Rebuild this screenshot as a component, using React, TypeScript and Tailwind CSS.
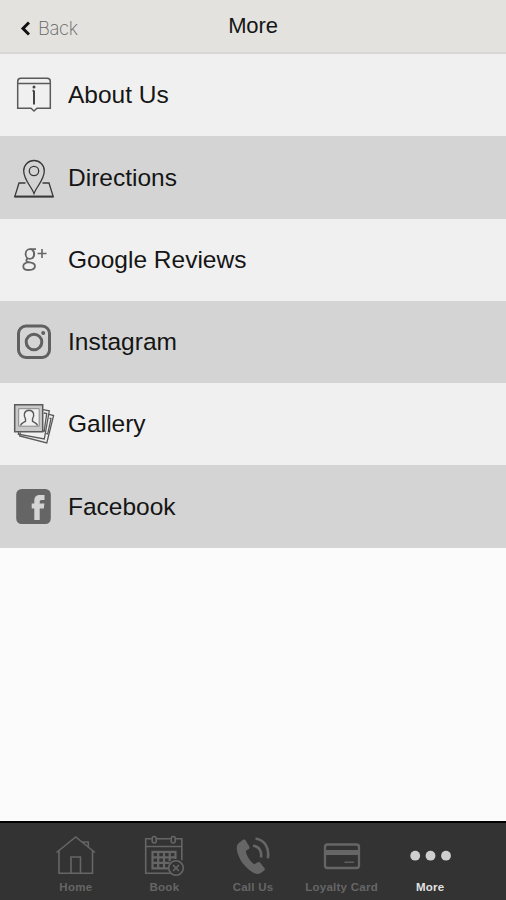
import type { ReactNode } from "react";

function AboutIcon() {
  return (
    <svg width="44" height="44" viewBox="0 0 44 44" fill="none" stroke="#5a5a5a" strokeWidth="1.5">
      <path d="M5.7 10.6V8.5c0-2 1-3.3 3-3.3h26.6c2 0 3 1.3 3 3.3v26.7H25L22 38l-3-2.8H5.7V10.6h32.6" />
      <path d="M22 17.5V31.5M20.5 17.8h1.5" stroke="#444" strokeWidth="2" />
      <circle cx="22" cy="14" r="1.5" fill="#444" stroke="none" />
    </svg>
  );
}

function DirectionsIcon() {
  return (
    <svg width="44" height="44" viewBox="0 0 44 44" fill="none" stroke="#383838" strokeWidth="1.3">
      <path d="M22 38.5C19.5 31.5 11.7 25 11.7 15.8a10.3 10.3 0 0 1 20.6 0C32.3 25 24.5 31.5 22 38.5z" />
      <circle cx="22" cy="16" r="4.7" />
      <path d="M13.5 28H7L2.8 41.5h38.4L37 28h-6.5" />
      <path d="M2.5 41.7h39" strokeWidth="1.8" />
    </svg>
  );
}

function GooglePlusIcon() {
  return (
    <svg width="44" height="44" viewBox="0 0 44 44" fill="none" stroke="#666" strokeWidth="1.8">
      <ellipse cx="17.8" cy="16" rx="4.2" ry="4.8" />
      <path d="M24 11.2h-6M21 12.5c1.8 2 1.8 6-.8 8M15.5 20.5c-1.8 1.7-1.6 3 1.2 3.6 3.8.8 6.3 1.3 6.3 3.9 0 2.5-2.6 4-6.2 4s-5.5-1.4-5.5-3.6c0-2.3 2-3.7 5.2-4.2" />
      <path d="M30 11v9M25.5 15.5h9" strokeWidth="1.6" />
    </svg>
  );
}

function InstagramIcon() {
  return (
    <svg width="44" height="44" viewBox="0 0 44 44" fill="none" stroke="#606060" strokeWidth="3">
      <rect x="6.5" y="6" width="31" height="31.5" rx="7.5" />
      <circle cx="22" cy="22" r="7.8" />
      <circle cx="31.2" cy="13" r="2" fill="#606060" stroke="none" />
    </svg>
  );
}

function GalleryIcon() {
  return (
    <svg width="44" height="44" viewBox="0 0 44 44" fill="none" stroke="#5a5a5a" strokeWidth="1.3">
      <path d="M37 12.3l4.6 1.2-6.8 27.4L7.7 34l.8-3.5" />
      <path d="M31 7.6l6.3 1.2-5 28.2-26-4.8.4-2" />
      <path d="M34 31.5l1.7.5 3.3-15.5-1.5-.4M31 29l1.2.2 2.5-17.7-3-.5" />
      <path d="M2.7 2.7h28v27h-28z" fill="#c9c9c9" strokeWidth="1.5" />
      <path d="M6.7 6.7h20.5v17.5H6.7z" fill="#f0f0f0" stroke="#888" strokeWidth="1" />
      <path d="M8.5 23.5c.5-2.5 3-3 5-4.2v-2.4c-2.3-3.5-1.5-8.7 3.5-8.7s5.8 5.2 3.5 8.7v2.4c2 1.2 4.5 1.7 5 4.2" strokeWidth="1.4" />
    </svg>
  );
}

function FacebookIcon() {
  return (
    <svg width="44" height="44" viewBox="0 0 44 44">
      <rect x="4.2" y="4" width="34.6" height="35" rx="5.5" fill="#656565" />
      <path d="M22.3 35V23.5h-2.6v-5h2.6v-2.7c0-4 2-5.7 6-5.7h4.2v4.9h-2.8c-1.6 0-2 .8-2 2v1.5h4.7l-.6 5h-4.1V35z" fill="#d4d4d4" />
    </svg>
  );
}

function HomeIcon() {
  return (
    <svg width="44" height="44" viewBox="0 0 44 44" fill="none" stroke="#666" strokeWidth="1.6">
      <path d="M2.5 18.5L21.7 3 41 18.5M5 16.5V39.3h33.5V16.5M17 39.3V23h9.5v16.3M28.5 8h5.8v5.2" />
    </svg>
  );
}

function BookIcon() {
  return (
    <svg width="44" height="44" viewBox="0 0 44 44" fill="none" stroke="#666" strokeWidth="1.6">
      <path d="M28.5 39.3H3.7V4.8h6M14.5 4.8h14M33.5 4.8h6.3v21.5M3.7 12.5h36" />
      <rect x="10.2" y="2.5" width="4" height="6.5" rx="2" />
      <rect x="29.2" y="2.5" width="4" height="6.5" rx="2" />
      <path d="M33.5 25v-7.2h-23v16.5H26M10.5 23.3h23M10.5 28.8h17M16.2 17.8v16.5M22 17.8v16.5M27.7 17.8v9.5" strokeWidth="2.2" />
      <circle cx="34" cy="34" r="7.3" />
      <path d="M31 31l6 6M37 31l-6 6" strokeWidth="1.6" />
    </svg>
  );
}

function CallIcon() {
  return (
    <svg width="44" height="44" viewBox="0 0 44 44" fill="none" stroke="#666" strokeWidth="2.6">
      <path d="M7.3 9.5l4.7-3.7c.9-.7 1.9-.5 2.5.4l3.8 6.3c.5.9.3 1.8-.5 2.4l-3 2.1c.8 4.8 4 10 8.5 13.2l3.5-1.9c.9-.5 1.8-.3 2.4.5l4.3 5.4c.6.8.5 1.7-.3 2.3l-3.8 2.7c-2.5 1.7-6 .5-9-1.8C13 32.5 8.3 25.5 6.3 18c-.9-3.4-.8-6.7 1-8.500z" fill="#666" stroke="none" />
      <path d="M22 11.8c6 .6 9 5.3 8 11.7M24.5 4.5c9.5 1.5 14 9.5 12.3 19.8" />
    </svg>
  );
}

function LoyaltyCardIcon() {
  return (
    <svg width="44" height="44" viewBox="0 0 44 44" fill="none" stroke="#666">
      <rect x="5" y="10.5" width="34" height="23.5" rx="2.5" strokeWidth="2.3" />
      <path d="M5 18.5h34" strokeWidth="5" />
      <path d="M24.5 28.2h9.5" strokeWidth="1.3" />
    </svg>
  );
}

function MoreIcon() {
  return (
    <svg width="44" height="44" viewBox="0 0 44 44" fill="#cfcfcf">
      <circle cx="7.2" cy="21.7" r="4.9" />
      <circle cx="22.5" cy="21.7" r="4.9" />
      <circle cx="38" cy="21.7" r="4.9" />
    </svg>
  );
}

type Item = { label: string; icon: ReactNode };

const rows: Item[] = [
  { label: "About Us", icon: <AboutIcon /> },
  { label: "Directions", icon: <DirectionsIcon /> },
  { label: "Google Reviews", icon: <GooglePlusIcon /> },
  { label: "Instagram", icon: <InstagramIcon /> },
  { label: "Gallery", icon: <GalleryIcon /> },
  { label: "Facebook", icon: <FacebookIcon /> },
];

const tabs: Item[] = [
  { label: "Home", icon: <HomeIcon /> },
  { label: "Book", icon: <BookIcon /> },
  { label: "Call Us", icon: <CallIcon /> },
  { label: "Loyalty Card", icon: <LoyaltyCardIcon /> },
  { label: "More", icon: <MoreIcon /> },
];

export default function App() {
  return (
    <div className="flex h-screen w-full flex-col overflow-hidden bg-[#fbfbfb] font-['Liberation_Sans',sans-serif]">
      <header className="grid h-[54px] shrink-0 grid-cols-3 items-center border-b-2 border-[#d9d8d5] bg-[#e3e2de]">
        <button className="flex items-center gap-2 pt-1 pl-5 text-left">
          <svg width="10" height="15" viewBox="0 0 10 15" fill="none" stroke="#111" strokeWidth="3">
            <path d="M9 1.5L3 7.5l6 6" />
          </svg>
          <span className="font-['Inter',sans-serif] text-[18.5px] leading-6 font-extralight tracking-[-0.4px] text-[#666]">Back</span>
        </button>
        <h1 className="text-center text-[22px] leading-6 tracking-[-0.1px] text-[#151515]">More</h1>
      </header>

      <ul className="shrink-0">
        {rows.map((row, i) => (
          <li
            key={row.label}
            className={`flex h-[82.3px] items-center gap-3 pl-3 ${i % 2 ? "bg-[#d4d4d4]" : "bg-[#f0f0f0]"}`}
          >
            {row.icon}
            <span className="pt-px text-[24.5px] text-[#151515]">{row.label}</span>
          </li>
        ))}
      </ul>

      <nav className="mt-auto flex h-[79px] shrink-0 justify-center border-t-2 border-black bg-[#333]">
        {tabs.map((tab) => (
          <button
            key={tab.label}
            className={`flex w-[88.6px] flex-col items-center pt-[11px] text-[11.5px] font-bold tracking-[0.25px] ${tab.label === "More" ? "text-[#e2e2e2]" : "text-[#666]"}`}
          >
            {tab.icon}
            <span className="leading-[18px] whitespace-nowrap">{tab.label}</span>
          </button>
        ))}
      </nav>
    </div>
  );
}
